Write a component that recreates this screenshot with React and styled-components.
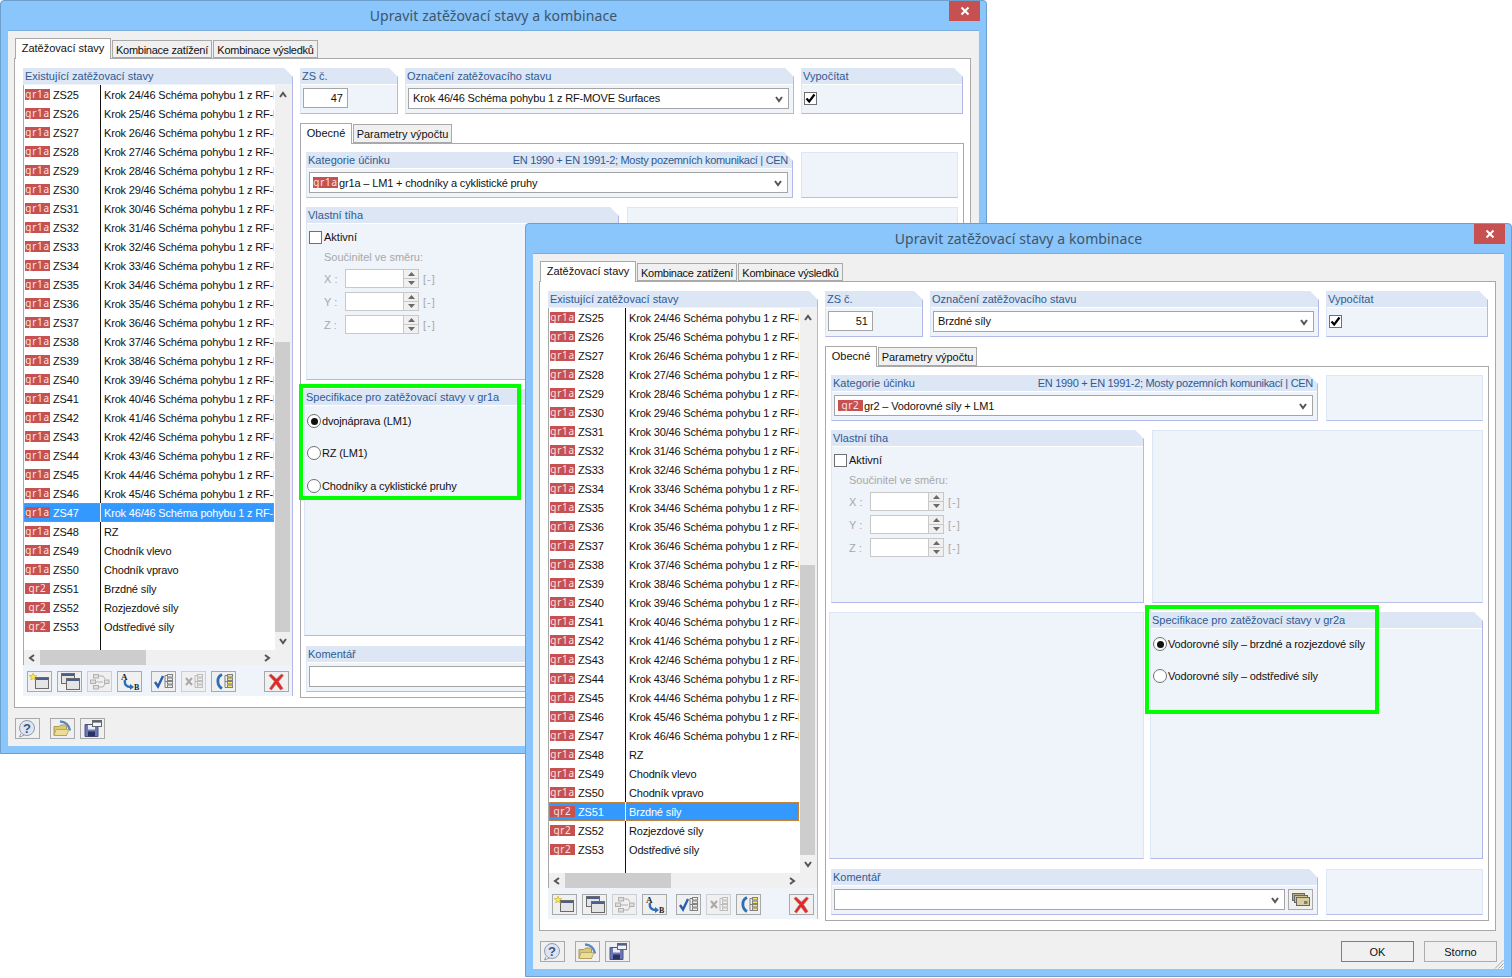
import React from "react";
import styled, { createGlobalStyle } from "styled-components";

const GlobalStyle = createGlobalStyle`
  html, body { margin: 0; padding: 0; background: #fff; }
  * { box-sizing: border-box; }
`;

const Desktop = styled.div`
  position: relative;
  width: 1512px;
  height: 978px;
  overflow: hidden;
  background: #fff;
  font-family: "Liberation Sans", Arial, sans-serif;
  font-size: 11px;
  color: #111;
`;

const Win = styled.div`
  position: absolute;
  left: ${(p) => p.$left}px;
  top: ${(p) => p.$top}px;
  width: 987px;
  height: 754px;
  display: flex;
  flex-direction: column;
  padding: 0 7px 7px;
  background: #8ac5fb;
  border: 1px solid #6c9fcb;
  border-radius: 4px 4px 0 0;
`;

const TitleBar = styled.div`
  height: 29px;
  display: grid;
  grid-template-columns: 1fr auto 1fr;
`;

const Title = styled.div`
  grid-column: 2;
  align-self: center;
  font-family: "Noto Sans", sans-serif;
  font-size: 14px;
  color: #3d5569;
  letter-spacing: 0.1px;
`;

const CloseBtn = styled.div`
  grid-column: 3;
  justify-self: end;
  width: 31px;
  height: 20px;
  display: flex;
  align-items: center;
  justify-content: center;
  background: #c75050;
  margin-right: -1px;
`;

const Client = styled.div`
  flex: 1;
  display: flex;
  flex-direction: column;
  padding: 7px 8px 0 6px;
  background: #f0f0f0;
  border-top: 1px solid #79aedc;
`;

const TabStrip = styled.div`
  height: 20px;
  display: flex;
  align-items: flex-end;
  gap: 1px;
  padding-left: ${(p) => p.$pad || 0}px;
`;

const Tab = styled.div`
  position: relative;
  width: ${(p) => p.$w}px;
  height: ${(p) => (p.$active ? 21 : p.$h || 18)}px;
  margin-bottom: ${(p) => (p.$active ? -1 : 0)}px;
  padding: ${(p) => (p.$active ? "0 0 2px" : "1px 0 0")};
  display: flex;
  align-items: center;
  justify-content: center;
  background: ${(p) => (p.$active ? "#fff" : "#f0f0f0")};
  border: 1px solid #a9a9a9;
  border-bottom: ${(p) => (p.$active ? "none" : "1px solid #a9a9a9")};
  z-index: ${(p) => (p.$active ? 2 : 1)};
  letter-spacing: ${(p) => (p.$tight ? "-0.25px" : "0")};
  white-space: nowrap;
`;

const TabPanel = styled.div`
  height: 650px;
  display: flex;
  gap: 7px;
  padding: 9px 7px 0 8px;
  background: #fff;
  border: 1px solid #a9a9a9;
`;

const Footer = styled.div`
  flex: 1;
  display: flex;
  align-items: flex-start;
  padding: 10px 0 0 1px;
  margin-right: -1px;
`;

const Group = styled.section`
  width: ${(p) => (p.$w ? `${p.$w}px` : "auto")};
  height: ${(p) => (p.$h ? `${p.$h}px` : "auto")};
  display: flex;
  flex-direction: column;
  background: #eff3fa;
  border-right: 1px solid #b3b8e8;
  border-bottom: 1px solid #b3b8e8;
  border-left: 1px solid #dce6f5;
  clip-path: polygon(0 0, calc(100% - 9px) 0, 100% 9px, 100% 100%, 0 100%);
`;

const GroupHead = styled.header`
  height: 16px;
  flex: none;
  display: flex;
  align-items: center;
  justify-content: space-between;
  padding: 0 2px 0 1px;
  background: #dce6f5;
  color: #2f5a92;
  white-space: nowrap;
`;

const HeadNote = styled.span`
  letter-spacing: -0.3px;
  margin-right: 2px;
`;

const GroupBody = styled.div`
  flex: 1;
  min-height: 0;
  border-top: 1px solid #fff;
  padding: ${(p) => p.$pad || "3px 4px 3px 2px"};
`;

const Blank = styled.div`
  background: #eff3fa;
  border: 1px solid #dce6f5;
  border-bottom-color: #b8c0ea;
`;

/* left list */
const ListGroup = styled(Group)`
  flex: none;
  width: 270px;
  height: 628px;
  border-left: none;
`;

const ListHead = styled(GroupHead)`
  padding-left: 2px;
`;

const ListBox = styled.div`
  display: grid;
  grid-template-columns: 251px 17px;
  height: 565px;
  margin-top: 1px;
  border-left: 1px solid #a9a9a9;
`;

const List = styled.div`
  display: flex;
  flex-direction: column;
  padding-right: 1px;
  background: #fff;
  overflow: hidden;
  letter-spacing: -0.18px;
`;

const Row = styled.div`
  height: 19px;
  flex: none;
  display: flex;
  background: ${(p) => (p.$selected ? "#3399ff" : "transparent")};
  color: ${(p) => (p.$selected ? "#fff" : "#111")};
  outline: ${(p) => (p.$selected ? "1px dotted #d08a40" : "none")};
  outline-offset: -1px;
`;

const RowFill = styled.div`
  flex: 1;
  margin-left: 76px;
  border-left: 1px solid #111;
`;

const IdCell = styled.div`
  width: 76px;
  flex: none;
  display: flex;
  align-items: center;
  gap: 3px;
  padding-left: 1px;
`;

const NameCell = styled.div`
  flex: 1;
  min-width: 0;
  display: flex;
  align-items: center;
  padding-left: 3px;
  border-left: 1px solid ${(p) => (p.$selected ? "#e6f0ff" : "#111")};
  white-space: nowrap;
  overflow: hidden;
`;

const Badge = styled.span`
  width: 25px;
  height: 11px;
  margin-bottom: 1px;
  flex: none;
  display: inline-flex;
  align-items: center;
  justify-content: center;
  background: #c75050;
  color: #f7e4e4;
  font-family: "Noto Sans", sans-serif;
  font-size: 10px;
  line-height: 11px;
  letter-spacing: 0.7px;
  overflow: hidden;
`;

const VScroll = styled.div`
  display: flex;
  flex-direction: column;
  align-items: flex-start;
  background: #f0f0f0;
`;

const ScrollArrow = styled.div`
  width: ${(p) => p.$w || 15}px;
  height: ${(p) => p.$h}px;
  flex: none;
  display: flex;
  align-items: center;
  justify-content: center;
`;

const VThumb = styled.div`
  width: 15px;
  height: 290px;
  margin-top: 237px;
  flex: none;
  background: #cdcdcd;
`;

const HScroll = styled.div`
  height: 15px;
  flex: none;
  display: flex;
  background: #f0f0f0;
  border-left: 1px solid #a9a9a9;
`;

const HThumb = styled.div`
  width: 106px;
  background: #cdcdcd;
`;

const Spacer = styled.div`
  flex: 1;
`;

const Toolbar = styled.div`
  height: 30px;
  flex: none;
  margin-top: 1px;
  display: flex;
  align-items: center;
  gap: 5px;
  padding: 0 3px 0 4px;
  background: #eff3fa;
`;

const ToolBtn = styled.div`
  width: 25px;
  height: 21px;
  flex: none;
  display: flex;
  align-items: center;
  justify-content: center;
  margin-left: ${(p) => p.$ml || 0}px;
  margin-right: ${(p) => p.$mr || 0}px;
  background: #f0f0f0;
  border: 1px solid ${(p) => (p.$off ? "#cfcfcf" : "#a9a9a9")};
  & svg { display: block; opacity: ${(p) => (p.$off ? 0.45 : 1)}; }
`;

const PushRight = styled.div`
  margin-left: auto;
`;

/* right side */
const RightCol = styled.div`
  width: 664px;
  flex: none;
  display: flex;
  flex-direction: column;
`;

const TopRow = styled.div`
  display: flex;
  height: 46px;
`;

const TopGroup = styled(Group)`
  margin-left: ${(p) => p.$ml || 0}px;
  height: 46px;
`;

const NumField = styled.div`
  width: 45px;
  height: 20px;
  display: flex;
  align-items: center;
  justify-content: flex-end;
  padding-right: 4px;
  background: #fff;
  border: 1px solid #a5a5a5;
`;

const Combo = styled.div`
  flex: ${(p) => (p.$grow ? 1 : "none")};
  height: 21px;
  display: flex;
  align-items: center;
  gap: 1px;
  padding: 0 4px 0 ${(p) => p.$padLeft ?? 4}px;
  background: #fff;
  border: 1px solid #a5a5a5;
  white-space: nowrap;
  overflow: hidden;
  letter-spacing: -0.15px;
`;

const ComboText = styled.span`
  flex: 1;
  min-width: 0;
  padding-bottom: ${(p) => (p.$lift ? 2 : 0)}px;
`;

const SubTabs = styled(TabStrip)`
  margin-top: 8px;
  height: 21px;
`;

const SubPanel = styled.div`
  height: 555px;
  display: flex;
  flex-direction: column;
  gap: 9px;
  padding: 8px 5px 0 3px;
  background: #fff;
  border: 1px solid #a9a9a9;
`;

const PanelRow = styled.div`
  display: grid;
  flex: none;
  grid-template-columns: ${(p) => p.$cols};
  column-gap: ${(p) => p.$gap}px;
  height: ${(p) => p.$h}px;
  margin-left: ${(p) => (p.$flush ? 0 : 2)}px;
  margin-top: ${(p) => p.$mt || 0}px;
`;

const ComboRow = styled.div`
  display: flex;
  align-items: center;
  gap: 3px;
`;

const CheckLine = styled.div`
  display: flex;
  align-items: center;
  gap: 2px;
  height: 14px;
`;

const CheckBox = styled.span`
  width: 13px;
  height: 13px;
  flex: none;
  display: flex;
  align-items: center;
  justify-content: center;
  background: #fff;
  border: 1px solid #707070;
`;

const Hint = styled.div`
  color: #a8a8a8;
  margin: 6px 0 0 15px;
  height: 14px;
  line-height: 14px;
`;

const Coeffs = styled.div`
  display: flex;
  flex-direction: column;
  gap: 4px;
  margin: 5px 0 0 15px;
`;

const CoeffRow = styled.div`
  height: 19px;
  display: flex;
  align-items: center;
  color: #a8a8a8;
`;

const CoeffLabel = styled.span`
  width: 21px;
  flex: none;
`;

const Unit = styled.span`
  letter-spacing: 1px;
`;

const Spin = styled.div`
  width: 74px;
  height: 19px;
  display: flex;
  justify-content: flex-end;
  background: #fff;
  border: 1px solid #c8c8c8;
  margin-right: 4px;
`;

const SpinBtns = styled.div`
  width: 15px;
  display: flex;
  flex-direction: column;
  background: #f0f0f0;
  border-left: 1px solid #c8c8c8;
`;

const SpinPart = styled.div`
  flex: 1;
  display: flex;
  align-items: center;
  justify-content: center;
  & + & { border-top: 1px solid #c8c8c8; }
`;

const Radios = styled.div`
  display: flex;
  flex-direction: column;
  gap: 18.4px;
  padding: 8px 0 0 2px;
  letter-spacing: -0.15px;
`;

const RadioLine = styled.div`
  height: 14px;
  display: flex;
  align-items: center;
  gap: 1px;
  white-space: nowrap;
`;

const Radio = styled.span`
  width: 14px;
  height: 14px;
  flex: none;
  display: flex;
  align-items: center;
  justify-content: center;
  border-radius: 50%;
  background: #fff;
  border: 1px solid #707070;
  &::after {
    content: "";
    display: ${(p) => (p.$on ? "block" : "none")};
    width: 7px;
    height: 7px;
    border-radius: 50%;
    background: #111;
  }
`;

const Highlight = styled.div`
  position: absolute;
  left: ${(p) => p.$x}px;
  top: ${(p) => p.$y}px;
  width: ${(p) => p.$w}px;
  height: ${(p) => p.$h}px;
  border: 4px solid #00ff00;
  z-index: 5;
`;

const DlgBtn = styled.div`
  width: 73px;
  height: 21px;
  display: flex;
  align-items: center;
  justify-content: center;
  margin-left: 10px;
  background: #f0f0f0;
  border: 1px solid ${(p) => (p.$primary ? "#3d8fd8" : "#adadad")};
`;

const Grip = styled.svg`
  position: absolute;
  right: 7px;
  bottom: 7px;
`;

/* icons */
const Chev = ({ dir = "down", size = 10, color = "#555" }) => {
  const pts = {
    down: "2,3 5,7 8,3",
    up: "2,7 5,3 8,7",
    left: "7,2 3,5 7,8",
    right: "3,2 7,5 3,8",
  };
  return (
    <svg width={size} height={size} viewBox="0 0 10 10">
      <polyline points={pts[dir]} fill="none" stroke={color} strokeWidth="2" />
    </svg>
  );
};

const Tri = ({ up }) => (
  <svg width="7" height="4" viewBox="0 0 7 4">
    <polygon points={up ? "0,4 3.5,0 7,4" : "0,0 3.5,4 7,0"} fill="#6a6a6a" />
  </svg>
);

const Tick = () => (
  <svg width="11" height="11" viewBox="0 0 11 11">
    <polyline points="1.5,5.5 4.2,8.5 9.5,1.5" fill="none" stroke="#000" strokeWidth="2.2" />
  </svg>
);

const Ico = ({ children }) => (
  <svg width="23" height="19" viewBox="0 0 23 19">{children}</svg>
);

const MiniWin = ({ x, y, w, h }) => (
  <g>
    <rect x={x} y={y} width={w} height={h} fill="#e4e4e4" stroke="#6a6a6a" />
    <rect x={x + 0.5} y={y + 0.5} width={w - 1} height="2" fill="#4a5f8c" />
  </g>
);

const ListLines = ({ color = "#eeeeee" }) => (
  <g stroke="#808080" fill={color}>
    <path d="M13 3.5V15.5M13 3.5h2M13 9.5h2M13 15.5h2" fill="none" />
    <rect x="15.5" y="2.5" width="5" height="2.5" />
    <rect x="15.5" y="6" width="5" height="2.5" />
    <rect x="15.5" y="9.5" width="5" height="2.5" />
    <rect x="15.5" y="13" width="5" height="2.5" />
  </g>
);

const NewIcon = () => (
  <Ico>
    <MiniWin x={7.5} y={5.5} w={13} h={11} />
    <polygon points="5,1 6,3.6 8.8,3.6 6.6,5.4 7.4,8 5,6.5 2.6,8 3.4,5.4 1.2,3.6 4,3.6" fill="#ffe94a" stroke="#b9a21c" strokeWidth="0.5" />
  </Ico>
);

const CopyIcon = () => (
  <Ico>
    <MiniWin x={3.5} y={1.5} w={13} h={10} />
    <MiniWin x={8.5} y={6.5} w={13} h={11} />
  </Ico>
);

const FlowIcon = () => (
  <Ico>
    <g fill="#ccc" stroke="#666">
      <rect x="5.5" y="2.5" width="5" height="3.5" />
      <rect x="2.5" y="8" width="5" height="3.5" />
      <rect x="5.5" y="13.5" width="5" height="3.5" />
      <rect x="16.5" y="8" width="4.5" height="3.5" />
    </g>
    <path d="M11 4h4l2 3M11 15h4l2-3M8 10h7" fill="none" stroke="#666" />
  </Ico>
);

const RenameIcon = () => (
  <Ico>
    <text x="3" y="8" fontFamily="Liberation Serif, serif" fontSize="9" fontWeight="700" fill="#222">A</text>
    <path d="M7 8c-1 5 2 7 6 7" fill="none" stroke="#2e6fb5" strokeWidth="2.4" />
    <polygon points="12,12 16,15 12,18" fill="#2e6fb5" />
    <text x="16" y="18" fontFamily="Liberation Serif, serif" fontSize="8" fontWeight="700" fill="#222">B</text>
  </Ico>
);

const CheckListIcon = () => (
  <Ico>
    <ListLines />
    <polyline points="3,10 6,14.5 11,4" fill="none" stroke="#2a5db0" strokeWidth="2.4" />
  </Ico>
);

const CrossListIcon = () => (
  <Ico>
    <ListLines />
    <path d="M4 6l6 7M10 6l-6 7" stroke="#555" strokeWidth="2" />
  </Ico>
);

const BracketListIcon = () => (
  <Ico>
    <ListLines color="#f7e560" />
    <path d="M10 2.5C4.5 5 4.5 13 10 16.5" fill="none" stroke="#2e6fb5" strokeWidth="2.8" />
  </Ico>
);

const DeleteIcon = () => (
  <Ico>
    <path d="M6 2l5.5 5 5-5 2 1.5-5 6 4.5 7-2.5 1.5-4.5-6L6.5 18l-2-1.5 5-7L4 3.5z" fill="#e02a2a" stroke="#b06a6a" strokeWidth="0.6" />
  </Ico>
);

const HelpIcon = () => (
  <Ico>
    <path d="M5 14.5L3.5 18l5-2" fill="#fff" stroke="#8f9ab0" />
    <circle cx="11" cy="9" r="7.5" fill="#dfe5f0" stroke="#8f9ab0" />
    <text x="11" y="14" textAnchor="middle" fontFamily="Liberation Sans, sans-serif" fontSize="13" fontWeight="700" fill="#3a5685">?</text>
  </Ico>
);

const FolderIcon = () => (
  <Ico>
    <path d="M9 2.5c5 0 9 3.5 10 9" fill="none" stroke="#5a86c0" strokeWidth="2.4" />
    <path d="M3 7.5h5l1.5-1.5h6v10.5H3z" fill="#d9c878" stroke="#a8985c" />
    <path d="M3 16.5l2-6h13l-2.5 6z" fill="#ebdc96" stroke="#a8985c" strokeWidth="0.7" />
  </Ico>
);

const SaveIcon = () => (
  <Ico>
    <path d="M4 5.5h13v12H4z" fill="#6a78b8" stroke="#4a5280" />
    <rect x="7" y="6" width="7" height="4.5" fill="#e8ecf6" />
    <rect x="7" y="12.5" width="7" height="5" fill="#2a3260" />
    <rect x="11.5" y="1.5" width="9" height="6" fill="#f4f4f4" stroke="#666" />
    <rect x="12" y="2" width="8" height="1.6" fill="#4a5f8c" />
  </Ico>
);

const StackIcon = () => (
  <Ico>
    <rect x="3.5" y="3.5" width="12" height="7" fill="#b9ad84" stroke="#666" />
    <rect x="5.5" y="5.5" width="13" height="7" fill="#cbbf93" stroke="#666" />
    <rect x="7.5" y="7.5" width="13" height="8" fill="#d8cca0" stroke="#666" />
    <rect x="15" y="11" width="3.5" height="3" fill="#6c8c6c" />
  </Ico>
);

const baseRows = () => {
  const rows = [];
  for (let i = 25; i <= 47; i++) {
    rows.push({ id: i, gr: "gr1a", name: `Krok ${i - 1}/46 Schéma pohybu 1 z RF-MOVE Surfaces` });
  }
  rows.push({ id: 48, gr: "gr1a", name: "RZ" });
  rows.push({ id: 49, gr: "gr1a", name: "Chodník vlevo" });
  rows.push({ id: 50, gr: "gr1a", name: "Chodník vpravo" });
  rows.push({ id: 51, gr: "gr2", name: "Brzdné síly" });
  rows.push({ id: 52, gr: "gr2", name: "Rozjezdové síly" });
  rows.push({ id: 53, gr: "gr2", name: "Odstředivé síly" });
  return rows;
};

const CaseList = ({ selected }) => (
  <ListGroup>
    <ListHead>Existující zatěžovací stavy</ListHead>
    <ListBox>
      <List>
        {baseRows().map((r) => (
          <Row key={r.id} $selected={r.id === selected}>
            <IdCell>
              <Badge>{r.gr}</Badge>
              <span>ZS{r.id}</span>
            </IdCell>
            <NameCell $selected={r.id === selected}>{r.name}</NameCell>
          </Row>
        ))}
        <RowFill />
      </List>
      <VScroll>
        <ScrollArrow $h={20}><Chev dir="up" /></ScrollArrow>
        <VThumb />
        <ScrollArrow $h={18}><Chev dir="down" /></ScrollArrow>
      </VScroll>
    </ListBox>
    <HScroll>
      <ScrollArrow $w={16} $h={15}><Chev dir="left" /></ScrollArrow>
      <HThumb />
      <Spacer />
      <ScrollArrow $w={50} $h={15}><Chev dir="right" /></ScrollArrow>
    </HScroll>
    <Toolbar>
      <ToolBtn><NewIcon /></ToolBtn>
      <ToolBtn><CopyIcon /></ToolBtn>
      <ToolBtn $off><FlowIcon /></ToolBtn>
      <ToolBtn><RenameIcon /></ToolBtn>
      <ToolBtn $ml={4}><CheckListIcon /></ToolBtn>
      <ToolBtn $off><CrossListIcon /></ToolBtn>
      <ToolBtn><BracketListIcon /></ToolBtn>
      <PushRight />
      <ToolBtn><DeleteIcon /></ToolBtn>
    </Toolbar>
  </ListGroup>
);

const Coeff = ({ axis }) => (
  <CoeffRow>
    <CoeffLabel>{axis} :</CoeffLabel>
    <Spin>
      <SpinBtns>
        <SpinPart><Tri up /></SpinPart>
        <SpinPart><Tri /></SpinPart>
      </SpinBtns>
    </Spin>
    <Unit>[-]</Unit>
  </CoeffRow>
);

const SelfWeight = () => (
  <Group>
    <GroupHead>Vlastní tíha</GroupHead>
    <GroupBody $pad="6px 2px">
      <CheckLine>
        <CheckBox />
        <span>Aktivní</span>
      </CheckLine>
      <Hint>Součinitel ve směru:</Hint>
      <Coeffs>
        <Coeff axis="X" />
        <Coeff axis="Y" />
        <Coeff axis="Z" />
      </Coeffs>
    </GroupBody>
  </Group>
);

const Spec = ({ title, options }) => (
  <Group>
    <GroupHead>{title}</GroupHead>
    <GroupBody $pad="0">
      <Radios>
        {options.map((o, i) => (
          <RadioLine key={o}>
            <Radio $on={i === 0} />
            <span>{o}</span>
          </RadioLine>
        ))}
      </Radios>
    </GroupBody>
  </Group>
);

const Dialog = ({ left, top, selected, number, name, badge, category, spec, specLeft, mark, grip }) => {
  const specNode = <Spec title={spec.title} options={spec.options} />;
  return (
    <Win $left={left} $top={top}>
      <TitleBar>
        <Title>Upravit zatěžovací stavy a kombinace</Title>
        <CloseBtn>
          <svg width="10" height="10" viewBox="0 0 10 10">
            <path d="M1.5 1.5l7 7M8.5 1.5l-7 7" stroke="#fff" strokeWidth="2" />
          </svg>
        </CloseBtn>
      </TitleBar>
      <Client>
        <TabStrip $pad={1}>
          <Tab $active $w={96}>Zatěžovací stavy</Tab>
          <Tab $w={100} $tight>Kombinace zatížení</Tab>
          <Tab $w={105} $tight>Kombinace výsledků</Tab>
        </TabStrip>
        <TabPanel>
          <CaseList selected={selected} />
          <RightCol>
            <TopRow>
              <TopGroup $w={98}>
                <GroupHead>ZS č.</GroupHead>
                <GroupBody><NumField>{number}</NumField></GroupBody>
              </TopGroup>
              <TopGroup $w={389} $ml={7}>
                <GroupHead>Označení zatěžovacího stavu</GroupHead>
                <GroupBody>
                  <Combo>
                    <ComboText $lift>{name}</ComboText>
                    <Chev />
                  </Combo>
                </GroupBody>
              </TopGroup>
              <TopGroup $w={162} $ml={7}>
                <GroupHead>Vypočítat</GroupHead>
                <GroupBody $pad="7px 2px">
                  <CheckBox><Tick /></CheckBox>
                </GroupBody>
              </TopGroup>
            </TopRow>
            <SubTabs>
              <Tab $active $w={52}>Obecné</Tab>
              <Tab $w={99} $h={19}>Parametry výpočtu</Tab>
            </SubTabs>
            <SubPanel>
              <PanelRow $cols="487px 157px" $gap={8} $h={46}>
                <Group>
                  <GroupHead>
                    <span>Kategorie účinku</span>
                    <HeadNote>EN 1990 + EN 1991-2; Mosty pozemních komunikací | CEN</HeadNote>
                  </GroupHead>
                  <GroupBody>
                    <Combo $padLeft={3}>
                      <Badge>{badge}</Badge>
                      <ComboText>{category}</ComboText>
                      <Chev />
                    </Combo>
                  </GroupBody>
                </Group>
                <Blank />
              </PanelRow>
              <PanelRow $cols="313px 331px" $gap={8} $h={173}>
                <SelfWeight />
                <Blank />
              </PanelRow>
              <PanelRow $flush $cols="315px 333px" $gap={6} $h={247}>
                {specLeft ? specNode : <Blank />}
                {specLeft ? <Blank /> : specNode}
              </PanelRow>
              <PanelRow $cols="487px 157px" $gap={8} $h={46} $mt={1}>
                <Group>
                  <GroupHead>Komentář</GroupHead>
                  <GroupBody>
                    <ComboRow>
                      <Combo $grow>
                        <ComboText />
                        <Chev />
                      </Combo>
                      <ToolBtn><StackIcon /></ToolBtn>
                    </ComboRow>
                  </GroupBody>
                </Group>
                <Blank />
              </PanelRow>
            </SubPanel>
          </RightCol>
        </TabPanel>
        <Footer>
          <ToolBtn $mr={5}><HelpIcon /></ToolBtn>
          <ToolBtn $ml={5}><FolderIcon /></ToolBtn>
          <ToolBtn $ml={5}><SaveIcon /></ToolBtn>
          <PushRight />
          <DlgBtn $primary>OK</DlgBtn>
          <DlgBtn>Storno</DlgBtn>
        </Footer>
      </Client>
      <Highlight $x={mark.x} $y={mark.y} $w={mark.w} $h={mark.h} />
      {grip && (
        <Grip width="11" height="11" viewBox="0 0 11 11">
          <path d="M10.5 2L2 10.5M10.5 5.5L5.5 10.5M10.5 8.5L8.5 10.5" stroke="#a8a8a8" />
        </Grip>
      )}
    </Win>
  );
};

export default function App() {
  return (
    <>
      <GlobalStyle />
      <Desktop>
        <Dialog
          left={0}
          top={0}
          selected={47}
          number={47}
          name="Krok 46/46 Schéma pohybu 1 z RF-MOVE Surfaces"
          badge="gr1a"
          category="gr1a – LM1 + chodníky a cyklistické pruhy"
          specLeft
          spec={{
            title: "Specifikace pro zatěžovací stavy v gr1a",
            options: ["dvojnáprava (LM1)", "RZ (LM1)", "Chodníky a cyklistické pruhy"],
          }}
          mark={{ x: 298, y: 383, w: 222, h: 116 }}
        />
        <Dialog
          left={525}
          top={223}
          selected={51}
          number={51}
          name="Brzdné síly"
          badge="gr2"
          category="gr2 – Vodorovné síly + LM1"
          spec={{
            title: "Specifikace pro zatěžovací stavy v gr2a",
            options: ["Vodorovné síly – brzdné a rozjezdové síly", "Vodorovné síly – odstředivé síly"],
          }}
          mark={{ x: 619, y: 381, w: 234, h: 109 }}
          grip
        />
      </Desktop>
    </>
  );
}
